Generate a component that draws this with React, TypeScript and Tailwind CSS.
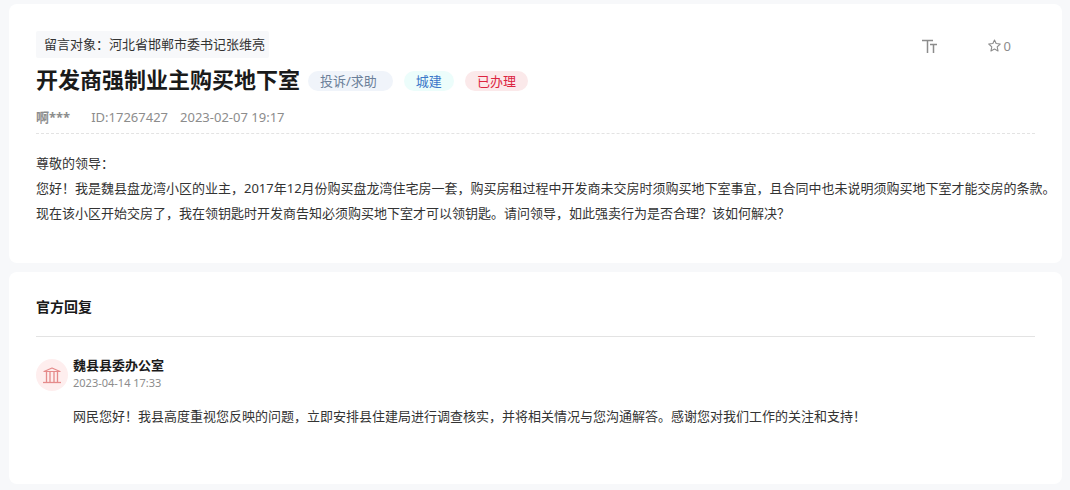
import type { ReactNode } from 'react';

const message = {
  target: '河北省邯郸市委书记张维亮',
  title: '开发商强制业主购买地下室',
  author: '啊***',
  id: '17267427',
  date: '2023-02-07 19:17',
  stars: 0,
  paragraphs: [
    '尊敬的领导：',
    '您好！我是魏县盘龙湾小区的业主，2017年12月份购买盘龙湾住宅房一套，购买房租过程中开发商未交房时须购买地下室事宜，且合同中也未说明须购买地下室才能交房的条款。',
    '现在该小区开始交房了，我在领钥匙时开发商告知必须购买地下室才可以领钥匙。请问领导，如此强卖行为是否合理？该如何解决？',
  ],
};

const tags = [
  { label: '投诉/求助', className: 'pr-4 bg-[#f0f4fa] text-[#6b7f99]' },
  { label: '城建', className: 'pr-3 bg-[#ecfdfb] text-[#3b78c9]' },
  { label: '已办理', className: 'pr-3 bg-[#fbe9ea] text-[#dc2440]' },
];

const reply = {
  office: '魏县县委办公室',
  date: '2023-04-14 17:33',
  text: '网民您好！我县高度重视您反映的问题，立即安排县住建局进行调查核实，并将相关情况与您沟通解答。感谢您对我们工作的关注和支持！',
};

function FontSizeIcon() {
  return (
    <svg width="16" height="14" viewBox="0 0 16 14" fill="none" stroke="currentColor" aria-hidden="true">
      <path d="M0 1.500h11M5.500 1.500V14" strokeWidth="1.5" />
      <path d="M8 5.500h7M11.500 5.500V14" strokeWidth="1.5" />
    </svg>
  );
}

function StarIcon() {
  return (
    <svg width="13" height="13" viewBox="0 0 12 12" fill="none" stroke="currentColor" aria-hidden="true">
      <path
        d="M6 .9 7.5 4.2l3.8.4-2.8 2.6.8 3.900L6 9.300l-3.300 1.800.8-3.900L.7 4.600l3.800-.4z"
        strokeWidth="1"
        strokeLinejoin="round"
      />
    </svg>
  );
}

function OfficeIcon() {
  return (
    <svg width="18" height="17" viewBox="0 0 18 17" fill="none" stroke="currentColor" aria-hidden="true">
      <path d="M1 4.500 9 1l8 3.500z" strokeWidth="1.2" strokeLinejoin="round" />
      <path d="M3.500 5v10.500M7 5v10.500M11 5v10.500M14.500 5v10.500" strokeWidth="1.3" />
      <path d="M0 15.500h18" strokeWidth="1.3" />
    </svg>
  );
}

function Card({ children }: { children: ReactNode }) {
  return <section className="rounded-lg bg-white px-[27px]">{children}</section>;
}

export default function App() {
  return (
    <main className="flex min-h-screen flex-col gap-[9px] bg-[#f7f8fa] pt-1 pr-2 pb-1.5 pl-[9px] font-['Noto_Sans','Noto_Sans_CJK_SC',sans-serif] text-[13px] text-[#333]">
      <Card>
        <div className="flex items-center justify-between pt-[27px]">
          <p className="rounded-xs bg-[#f7f8fa] pr-1 pl-2 leading-[27px]">留言对象：{message.target}</p>
          <div className="flex items-center gap-[50px] pt-0.5 pr-6 text-[#8c8c8c]">
            <button type="button" aria-label="字号">
              <FontSizeIcon />
            </button>
            <button type="button" aria-label="收藏" className="flex items-center gap-[3px] leading-5">
              <StarIcon />
              {message.stars}
            </button>
          </div>
        </div>

        <div className="flex items-end gap-2 pt-[7px]">
          <h1 className="text-[22px] leading-7 font-bold text-[#1a1a1a]">{message.title}</h1>
          <div className="flex gap-[11px] pb-0.5 leading-5">
            {tags.map((tag) => (
              <span key={tag.label} className={`rounded-full pl-3 ${tag.className}`}>
                {tag.label}
              </span>
            ))}
          </div>
        </div>

        <div className="flex border-b border-dashed border-[#e3e3e3] pt-3.5 pb-1.5 leading-5 text-[#8c8c8c]">
          <span className="mr-[21px] font-bold">{message.author}</span>
          <span className="mr-3">ID:{message.id}</span>
          <time>{message.date}</time>
        </div>

        {/* long lines may run a little into the card padding */}
        <div className="-mr-6 pt-[17px] pb-[37px] leading-[25px]">
          {message.paragraphs.map((text) => (
            <p key={text}>{text}</p>
          ))}
        </div>
      </Card>

      <Card>
        <h2 className="border-b border-[#e3e3e3] pt-[25px] pb-[19px] text-sm leading-5 font-bold text-[#1a1a1a]">
          官方回复
        </h2>
        <div className="flex items-start gap-[5px] pt-5 pb-[55px]">
          <div className="mt-0.5 flex size-8 shrink-0 items-center justify-center rounded-full bg-[#feeeee] text-[#e58b8b]">
            <OfficeIcon />
          </div>
          <div>
            <h3 className="leading-4 font-bold text-[#1a1a1a]">{reply.office}</h3>
            <time className="block text-[11px] leading-5 text-[#8c8c8c]">{reply.date}</time>
            <p className="pt-[11px] leading-[25px]">{reply.text}</p>
          </div>
        </div>
      </Card>
    </main>
  );
}
